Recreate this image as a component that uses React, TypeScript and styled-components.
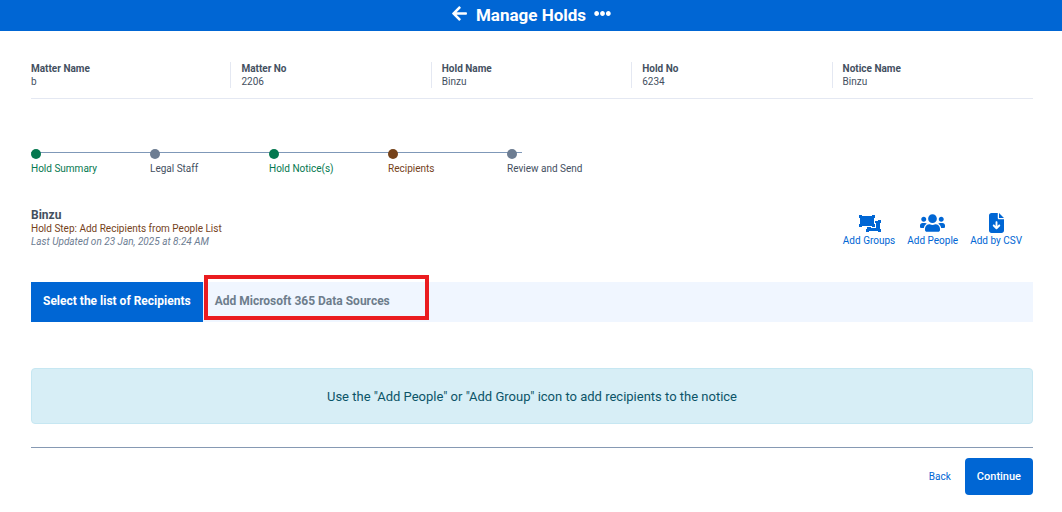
import React from "react";
import styled, { createGlobalStyle } from "styled-components";
import { FaArrowLeft, FaEllipsisH, FaUsers } from "react-icons/fa";
import { FaFileArrowDown } from "react-icons/fa6";

const GlobalStyle = createGlobalStyle`
  * { box-sizing: border-box; }
  body {
    margin: 0;
    background: #fff;
    color: #44505f;
    font-family: Roboto, "Liberation Sans", sans-serif;
    font-size: 10px;
    line-height: 13px;
  }
  button { font-family: inherit; cursor: pointer; border: 0; padding: 0; background: none; }
`;

const TopBar = styled.header`
  display: flex;
  align-items: center;
  justify-content: center;
  gap: 8px;
  height: 31px;
  background: #0066d4;
  color: #fff;
`;

const Title = styled.h1`
  margin: 0;
  font-size: 17px;
  font-weight: 700;
  line-height: 31px;
`;

const BarButton = styled.button`
  display: flex;
  padding-bottom: 4px;
  color: #fff;
  font-size: 17px;
`;

const Page = styled.main`
  padding: 31px 29px 0 31px;
`;

const Summary = styled.dl`
  display: grid;
  grid-template-columns: repeat(5, 1fr);
  margin: 0;
  padding-bottom: 10px;
  border-bottom: 1px solid #e4e8f2;
`;

const SummaryItem = styled.div`
  padding-left: 10px;
  border-right: 1px solid #e4e8f2;
  &:first-child { padding-left: 0; }
  &:last-child { border-right: 0; }
`;

const Term = styled.dt`
  font-weight: 700;
`;

const Detail = styled.dd`
  margin: 0;
`;

const Steps = styled.ol`
  display: flex;
  list-style: none;
  margin: 50px 0 0;
  padding: 0;
`;

const tones = { done: "#04784f", idle: "#6d7d92", active: "#75421a" };
type Tone = keyof typeof tones;

const Step = styled.li<{ $tone: Tone }>`
  width: 119px;
  white-space: nowrap;
  color: ${(p) => (p.$tone === "idle" ? "#44505f" : tones[p.$tone])};
`;

const Track = styled.div<{ $tone: Tone }>`
  height: 10px;
  margin-bottom: 3px;
  background: linear-gradient(#7f98b8, #7f98b8) 0 3px / 100% 1px no-repeat;
  &::before {
    content: "";
    display: block;
    width: 10px;
    height: 10px;
    border-radius: 50%;
    background: ${(p) => tones[p.$tone]};
  }
  ${Step}:last-child & { width: 15px; }
`;

const NoticeHeader = styled.section`
  display: flex;
  justify-content: space-between;
  margin-top: 33px;
`;

const NoticeName = styled.h2`
  margin: 0;
  font-size: 12px;
  line-height: 14px;
  font-weight: 700;
`;

const StepText = styled.p`
  margin: 0;
  color: #75421a;
`;

const Updated = styled.p`
  margin: 0;
  font-style: italic;
  color: #6d7d92;
`;

const Actions = styled.div`
  display: flex;
  gap: 12px;
  padding: 5px 11px 0 0;
`;

const ActionButton = styled.button`
  display: flex;
  flex-direction: column;
  align-items: center;
  gap: 1px;
  color: #0066d4;
  font-size: 10px;
  line-height: 13px;
  svg { width: 25px; height: 20px; }
`;

const Tabs = styled.div`
  display: flex;
  margin-top: 34px;
  background: #f0f6ff;
`;

const Tab = styled.button<{ $active?: boolean }>`
  position: relative;
  height: 40px;
  padding: 0 12px 2px;
  font-size: 12px;
  font-weight: 700;
  background: ${(p) => (p.$active ? "#0066d4" : "transparent")};
  color: ${(p) => (p.$active ? "#fff" : "#6d7d8c")};
`;

const Highlight = styled.span`
  position: absolute;
  top: -7px;
  left: 1px;
  width: 225px;
  height: 45px;
  border: 4px solid #ea1c20;
  pointer-events: none;
`;

const Alert = styled.p`
  margin: 46px 0 0;
  padding: 20px 19px 18px;
  border: 1px solid #c6e7f2;
  border-radius: 4px;
  background: #d7eef6;
  color: #0b5468;
  font-size: 13px;
  line-height: 16px;
  text-align: center;
`;

const Footer = styled.footer`
  display: flex;
  justify-content: flex-end;
  align-items: center;
  gap: 14px;
  margin-top: 23px;
  padding-top: 10px;
  border-top: 1px solid #8699b3;
`;

const BackLink = styled.a`
  color: #0066d4;
  text-decoration: none;
`;

const ContinueButton = styled.button`
  height: 37px;
  padding: 0 12px;
  border-radius: 4px;
  background: #0066d4;
  color: #fff;
  font-size: 11px;
  font-weight: 500;
`;

const summary = [
  ["Matter Name", "b"],
  ["Matter No", "2206"],
  ["Hold Name", "Binzu"],
  ["Hold No", "6234"],
  ["Notice Name", "Binzu"],
];

const steps: { label: string; tone: Tone }[] = [
  { label: "Hold Summary", tone: "done" },
  { label: "Legal Staff", tone: "idle" },
  { label: "Hold Notice(s)", tone: "done" },
  { label: "Recipients", tone: "active" },
  { label: "Review and Send", tone: "idle" },
];

/* Two overlapping frames with corner handles, the rear one cut back by a thin gap. */
function GroupsIcon() {
  return (
    <svg viewBox="0 0 25 20" fill="currentColor" aria-hidden="true">
      <path d="M2 2h3v1h10V2h3v3h-1v6h1v3h-3v-1H5v1H2v-3h1V5H2z" />
      <path d="M19 8h2V7h3v3h-1v6h1v3h-3v-1h-9v1H9v-3h1v-2h4v1h5v-5h-1V8z" />
    </svg>
  );
}

export default function App() {
  return (
    <>
      <GlobalStyle />
      <TopBar>
        <BarButton aria-label="Go back"><FaArrowLeft /></BarButton>
        <Title>Manage Holds</Title>
        <BarButton aria-label="More options"><FaEllipsisH /></BarButton>
      </TopBar>
      <Page>
        <Summary>
          {summary.map(([term, value]) => (
            <SummaryItem key={term}>
              <Term>{term}</Term>
              <Detail>{value}</Detail>
            </SummaryItem>
          ))}
        </Summary>
        <Steps>
          {steps.map((s) => (
            <Step key={s.label} $tone={s.tone}>
              <Track $tone={s.tone} />
              {s.label}
            </Step>
          ))}
        </Steps>
        <NoticeHeader>
          <div>
            <NoticeName>Binzu</NoticeName>
            <StepText>Hold Step: Add Recipients from People List</StepText>
            <Updated>Last Updated on 23 Jan, 2025 at 8:24 AM</Updated>
          </div>
          <Actions>
            <ActionButton><GroupsIcon />Add Groups</ActionButton>
            <ActionButton><FaUsers />Add People</ActionButton>
            <ActionButton><FaFileArrowDown />Add by CSV</ActionButton>
          </Actions>
        </NoticeHeader>
        <Tabs role="tablist">
          <Tab role="tab" aria-selected={true} $active>Select the list of Recipients</Tab>
          <Tab role="tab" aria-selected={false}>
            Add Microsoft 365 Data Sources
            <Highlight />
          </Tab>
        </Tabs>
        <Alert>Use the "Add People" or "Add Group" icon to add recipients to the notice</Alert>
        <Footer>
          <BackLink href="#back">Back</BackLink>
          <ContinueButton>Continue</ContinueButton>
        </Footer>
      </Page>
    </>
  );
}
